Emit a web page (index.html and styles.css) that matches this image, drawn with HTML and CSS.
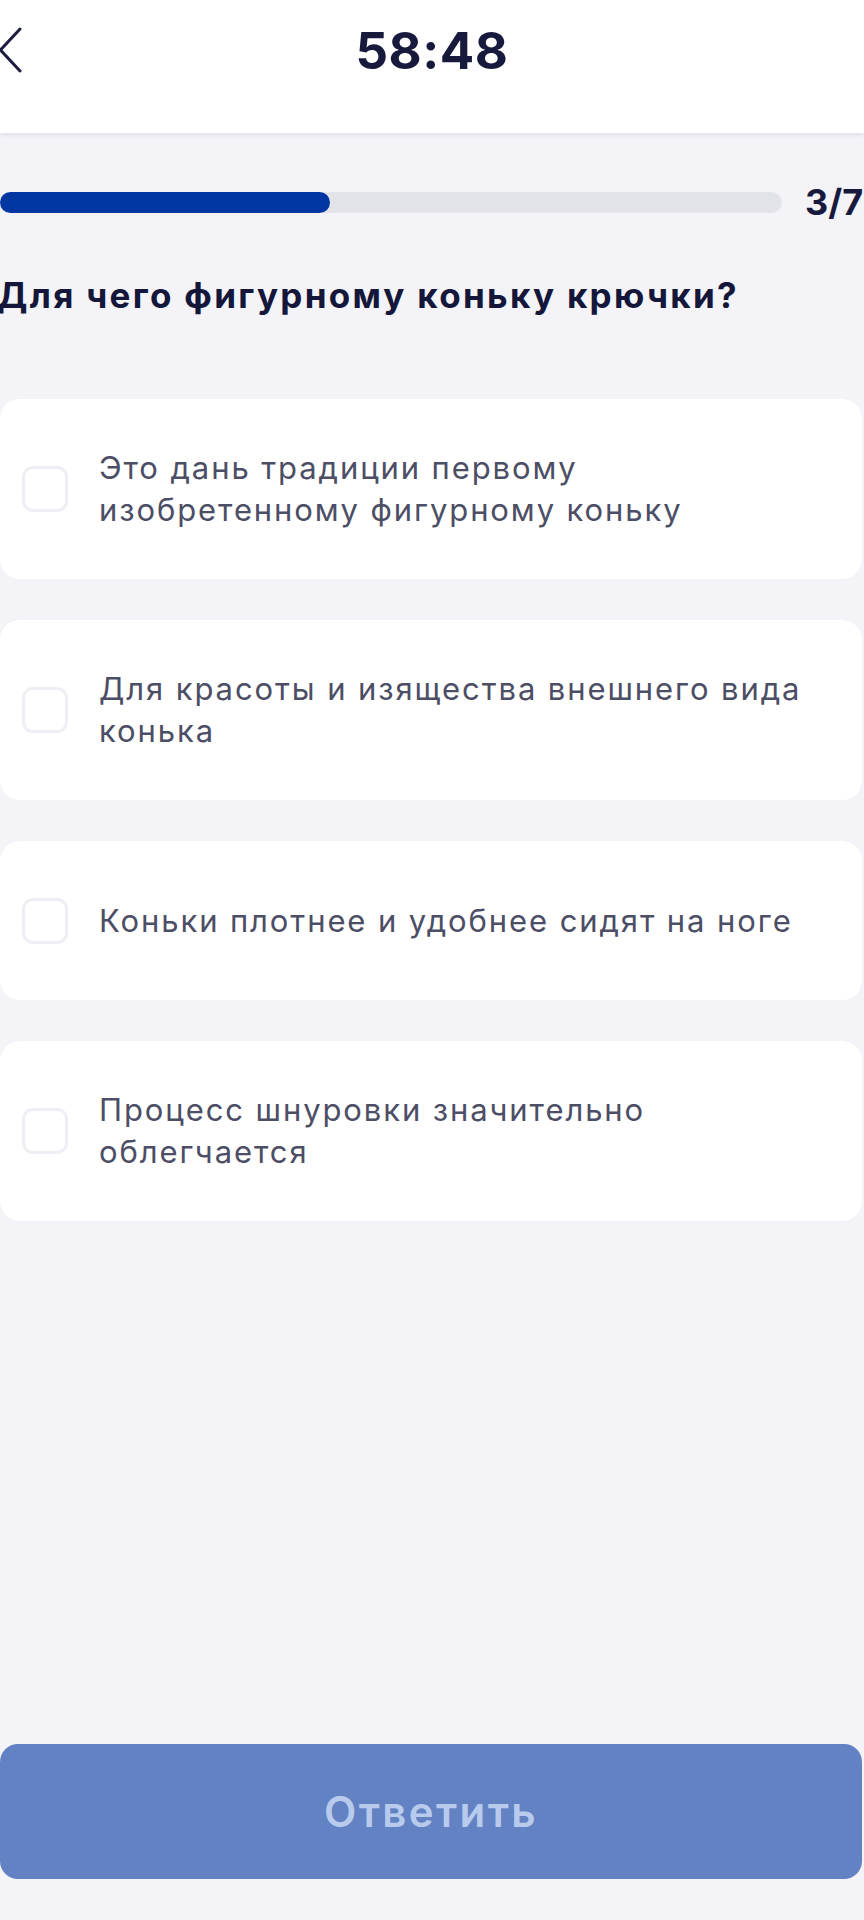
FILE: index.html
```html
<!DOCTYPE html>
<html lang="ru">

<head>
    <meta charset="UTF-8">
    <meta name="viewport" content="width=device-width, initial-scale=1.0">
    <title>Тест</title>
    <link rel="stylesheet" href="styles.css">
</head>

<body>

    <header class="topbar">
        <a class="back" href="#">
            <svg width="24" height="46" viewBox="0 0 24 46">
                <path d="M21 2 L1.5 23 L21 44" fill="none" stroke="#1c1d3f" stroke-width="3" stroke-linecap="round" stroke-linejoin="round"/>
            </svg>
        </a>
        <div class="timer">58:48</div>
        <div></div>
    </header>

    <main class="quiz">
        <div class="progress">
            <div class="track">
                <div class="fill" style="width: 330px"></div>
            </div>
            <span class="count">3/7</span>
        </div>

        <h2 class="question">Для чего фигурному коньку крючки?</h2>

        <div class="options">
            <label class="option">
                <span class="check"></span>
                <span class="text">Это дань традиции первому изобретенному фигурному коньку</span>
            </label>
            <label class="option">
                <span class="check"></span>
                <span class="text">Для красоты и изящества внешнего вида конька</span>
            </label>
            <label class="option">
                <span class="check"></span>
                <span class="text">Коньки плотнее и удобнее сидят на ноге</span>
            </label>
            <label class="option">
                <span class="check"></span>
                <span class="text">Процесс шнуровки значительно облегчается</span>
            </label>
        </div>

        <button class="submit" disabled>Ответить</button>
    </main>

</body>

</html>
```

FILE: styles.css
```css
body {
    margin: 0;
    padding: 0;
    width: 864px;
    height: 1920px;
    overflow: hidden;
    background-color: #f3f3f8;
    font-family: Inter, "Noto Sans", sans-serif;
    display: flex;
    flex-direction: column;
}

.topbar {
    display: grid;
    grid-template-columns: 1fr auto 1fr;
    align-items: center;
    height: 100px;
    padding-bottom: 33px;
    background-color: #ffffff;
    box-shadow: 0 2px 5px rgba(20, 22, 60, 0.09);
    position: relative;
    z-index: 1;
}

.back {
    display: flex;
    align-items: center;
    margin-left: -1px;
}

.timer {
    font-size: 51px;
    font-weight: 700;
    color: #171a3d;
    letter-spacing: 0.5px;
}

.quiz {
    flex: 1;
    display: flex;
    flex-direction: column;
    padding: 49px 2px 41px 0;
}

.progress {
    display: flex;
    align-items: center;
    gap: 23px;
    height: 40px;
}

.track {
    width: 782px;
    height: 21px;
    border-radius: 11px;
    background-color: #e3e4ea;
    flex-shrink: 0;
}

.fill {
    height: 100%;
    border-radius: 11px;
    background-color: #0036a1;
}

.count {
    font-size: 36px;
    font-weight: 700;
    color: #171a3d;
    white-space: nowrap;
}

.question {
    margin: 52px 0 0 -3px;
    font-size: 35px;
    line-height: 42px;
    font-weight: 700;
    letter-spacing: 2.3px;
    color: #14163a;
}

.options {
    display: flex;
    flex-direction: column;
    gap: 41px;
    margin-top: 83px;
}

.option {
    display: flex;
    align-items: center;
    gap: 31px;
    min-height: 159px;
    box-sizing: border-box;
    padding: 48px 20px 48px 22px;
    background-color: #ffffff;
    border-radius: 20px;
}

.check {
    width: 46px;
    height: 46px;
    box-sizing: border-box;
    border: 3px solid #eeeff4;
    border-radius: 11px;
    flex-shrink: 0;
}

.text {
    font-size: 31px;
    line-height: 42px;
    letter-spacing: 1.9px;
    color: #4c4e65;
}

.submit {
    margin-top: auto;
    height: 135px;
    border: none;
    border-radius: 18px;
    background-color: #6282c4;
    color: #b9cbec;
    font-family: Inter, "Noto Sans", sans-serif;
    font-size: 42px;
    font-weight: 600;
    letter-spacing: 2.4px;
}
```
